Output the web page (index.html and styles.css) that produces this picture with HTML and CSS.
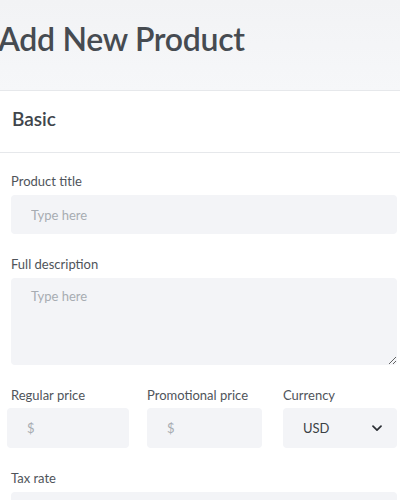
FILE: index.html
```html
<!DOCTYPE html>
<html>
<head>
<meta charset="utf-8">
<link rel="stylesheet" href="styles.css">
</head>
<body>
<div class="page">
  <header class="page-head">
    <h1 class="page-title">Add New Product</h1>
  </header>
  <section class="card">
    <div class="card-head"><h2 class="card-title">Basic</h2></div>
    <div class="card-body">
      <div class="field">
        <label class="label">Product title</label>
        <input class="input" type="text" placeholder="Type here">
      </div>
      <div class="field">
        <label class="label">Full description</label>
        <textarea class="input textarea" placeholder="Type here"></textarea>
      </div>
      <div class="field price-row">
        <div class="col">
          <label class="label">Regular price</label>
          <input class="input input-first" type="text" placeholder="$">
        </div>
        <div class="col">
          <label class="label">Promotional price</label>
          <input class="input input-mid" type="text" placeholder="$">
        </div>
        <div class="col">
          <label class="label">Currency</label>
          <div class="input select">
            <span>USD</span>
            <svg class="chev" width="10" height="7" viewBox="0 0 10 7"><path d="M1 1.2 L5 5.2 L9 1.2" fill="none" stroke="#2b2f34" stroke-width="1.7" stroke-linecap="round" stroke-linejoin="round"/></svg>
          </div>
        </div>
      </div>
      <div class="field">
        <label class="label">Tax rate</label>
        <input class="input" type="text" placeholder="%">
      </div>
    </div>
  </section>
</div>
</body>
</html>
```
FILE: styles.css
```css
html, body {
  margin: 0;
  padding: 0;
  background: #ffffff;
  overflow: hidden;
}
body {
  font-family: Lato, "Open Sans", sans-serif;
  color: #4b5057;
}
.page {
  width: 400px;
}
.page-head {
  background: linear-gradient(#f2f3f5, #f6f7f9);
  height: 90px;
  box-sizing: border-box;
  padding-top: 20px;
}
.page-title {
  margin: 0 0 0 -2px;
  font-size: 32px;
  line-height: 38px;
  font-weight: 600;
  color: #464b51;
  letter-spacing: -0.3px;
  white-space: nowrap;
}
.card {
  background: #fff;
  border-top: 1px solid #e6e8eb;
}
.card-head {
  padding: 17px 12px 22px;
  border-bottom: 1px solid #e6e8eb;
}
.card-title {
  margin: 0;
  font-size: 19px;
  line-height: 22px;
  font-weight: 600;
  color: #40454b;
}
.card-body {
  padding: 18px 3px 0 11px;
  display: flex;
  flex-direction: column;
  gap: 20px;
}
.field {
  display: flex;
  flex-direction: column;
}
.label {
  display: block;
  font-size: 13px;
  line-height: 20px;
  color: #4f545a;
  margin-bottom: 4px;
}
.input {
  box-sizing: border-box;
  height: 39px;
  border: none;
  outline: none;
  border-radius: 4px;
  background: #f3f4f7;
  padding: 0 20px;
  font-family: Lato, sans-serif;
  font-size: 13px;
  color: #3a3f45;
  width: 100%;
  margin: 0;
}
.input::placeholder {
  color: #a7acb2;
}
.textarea {
  height: 87px;
  padding-top: 10px;
  resize: vertical;
  display: block;
}
.price-row {
  display: grid;
  grid-template-columns: 136px 136px 1fr;
}
.price-row .label {
  margin-bottom: 3px;
}
.price-row .input {
  height: 40px;
}
.col {
  display: flex;
  flex-direction: column;
}
.input-first {
  width: 122px;
  margin-left: -4px;
}
.input-mid {
  width: 115px;
}
.select {
  display: flex;
  align-items: center;
  justify-content: space-between;
  font-size: 13px;
  color: #3a3f45;
  padding: 0 15px 0 20px;
}
.chev {
  display: block;
}
```
